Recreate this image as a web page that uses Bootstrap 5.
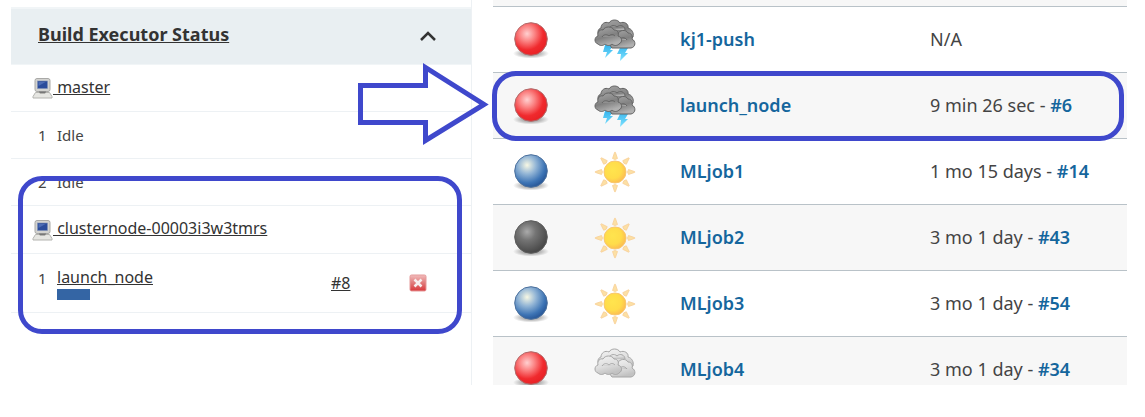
<!DOCTYPE html>
<html lang="en">
<head>
<meta charset="utf-8">
<meta name="viewport" content="width=device-width, initial-scale=1">
<title>Build Executor Status</title>
<link href="https://cdn.jsdelivr.net/npm/bootstrap@5.3.0/dist/css/bootstrap.min.css" rel="stylesheet">
<style>
  body { font-family: "Noto Sans", sans-serif; color: #444; background: #fff; }
  .board { grid-template-columns: 8fr 11fr; column-gap: 21px; padding: 0 18px 32px 11px; }
  table { width: 100%; table-layout: fixed; border-collapse: separate; border-spacing: 0; }
  td { padding: 0; vertical-align: middle; }

  /* executors */
  .side { border-right: 1px solid #edf1f4; padding-top: 7px; }
  .side-head { height: 58px; padding: 0 34px 6px 27px; background: #e9eff2; border-top: 2px solid #f1f5f7; border-bottom: 1px solid #f1f5f7; }
  .side-head h2 { font-size: 18px; line-height: 24px; font-weight: 700; }
  .side-head button { line-height: 0; padding-top: 4px; }
  .side a { color: #333; text-decoration-skip-ink: none; }
  .executors { font-size: 15px; line-height: 20px; }
  .executors td { height: 47px; border-bottom: 1px solid #edf1f4; }
  .executors .agent td { height: 48px; }
  .executors .busy td { height: 59px; }
  .executors .num { padding-left: 27px; }
  .executors .busy .num { padding-top: 14px; vertical-align: top; }
  .executors .node { padding-left: 21px; }
  .executors a { font-size: 16px; }
  .executors .progress { width: 33px; height: 11px; margin-top: 2px; border-radius: 0; --bs-progress-bar-bg: #3465a4; }
  .w-num { width: 46px; } .w-build { width: 62px; } .w-stop { width: 78px; }

  /* jobs */
  .strip { height: 7px; background: #f7f7f7; border-bottom: 1px solid #b9c2c8; }
  .jobs { font-size: 18px; line-height: 24px; }
  .jobs td { height: 66px; border-bottom: 1px solid #b9c2c8; }
  .jobs tr:nth-child(even) td { background: #f7f7f7; }
  .jobs a { color: #15669d; font-weight: 600; text-decoration: none; }
  .jobs .txt { padding-left: 19px; padding-bottom: 2px; }
  .jobs .cut td { height: 48px; border: 0; vertical-align: top; padding-top: 20px; }
  .jobs .cut .pic { padding-top: 8px; }
  .cut .pic div { height: 40px; overflow: hidden; }
  .pic { text-align: center; }
  .pic svg { display: block; width: 48px; height: 48px; margin: 0 auto; }
  .w-ball { width: 76px; } .w-sky { width: 92px; } .w-job { width: 250px; }

  /* annotations drawn over the page */
  .ring { position: absolute; border: 5px solid #3f48cc; border-radius: 24px; pointer-events: none; z-index: 2; }
  .ring-node { inset: -30px 9px -21px 7px; }
  .ring-job { inset: -2px 3px -2px -1px; }
  .arrow { position: absolute; right: 100%; top: -13px; margin-right: 4px; z-index: 2; }
</style>
</head>
<body>
<svg width="0" height="0" class="position-absolute" aria-hidden="true">
  <defs>
    <radialGradient id="gRed" cx=".38" cy=".34" r=".66"><stop offset="0" stop-color="#ffd0d0"/><stop offset=".35" stop-color="#fb8585"/><stop offset=".75" stop-color="#f02a2e"/><stop offset="1" stop-color="#e92226"/></radialGradient>
    <radialGradient id="gBlue" cx=".38" cy=".32" r=".68"><stop offset="0" stop-color="#f8f8e4"/><stop offset=".4" stop-color="#94b6d6"/><stop offset=".8" stop-color="#3d74b5"/><stop offset="1" stop-color="#2a5a9b"/></radialGradient>
    <radialGradient id="gGrey" cx=".38" cy=".34" r=".66"><stop offset="0" stop-color="#aaa"/><stop offset=".4" stop-color="#747474"/><stop offset="1" stop-color="#484848"/></radialGradient>
    <radialGradient id="gShade"><stop offset="0" stop-color="#000" stop-opacity=".5"/><stop offset=".6" stop-color="#000" stop-opacity=".22"/><stop offset="1" stop-color="#000" stop-opacity="0"/></radialGradient>
    <radialGradient id="gSun" cx=".4" cy=".4" r=".65"><stop offset="0" stop-color="#ffe44e"/><stop offset=".6" stop-color="#ffdc4a"/><stop offset="1" stop-color="#fcb852"/></radialGradient>
    <linearGradient id="gStorm" x1="0" y1="0" x2=".4" y2="1"><stop offset="0" stop-color="#a8a8a8"/><stop offset=".6" stop-color="#808080"/><stop offset="1" stop-color="#b0b0b0"/></linearGradient>
    <linearGradient id="gCloud" x1="0" y1="0" x2=".4" y2="1"><stop offset="0" stop-color="#f4f4f4"/><stop offset=".6" stop-color="#dedede"/><stop offset="1" stop-color="#c2c2c2"/></linearGradient>
    <linearGradient id="gBolt" x1="0" y1="0" x2="0" y2="1"><stop offset="0" stop-color="#35b4ec"/><stop offset="1" stop-color="#7fe2ff"/></linearGradient>
    <linearGradient id="gStop" x1="0" y1="0" x2="0" y2="1"><stop offset="0" stop-color="#f2bcbc"/><stop offset=".5" stop-color="#e07a7a"/><stop offset="1" stop-color="#d9363a"/></linearGradient>
    <symbol id="red" viewBox="0 0 48 48"><ellipse cx="24" cy="37.500" rx="18" ry="5" fill="url(#gShade)"/><circle cx="24" cy="23" r="16.300" fill="url(#gRed)" stroke="#b06a6a"/></symbol>
    <symbol id="blue" viewBox="0 0 48 48"><ellipse cx="24" cy="37.500" rx="18" ry="5" fill="url(#gShade)"/><circle cx="24" cy="23" r="16.300" fill="url(#gBlue)" stroke="#4a6f9c"/></symbol>
    <symbol id="grey" viewBox="0 0 48 48"><ellipse cx="24" cy="37.500" rx="18" ry="5" fill="url(#gShade)"/><circle cx="24" cy="23" r="16.300" fill="url(#gGrey)" stroke="#5c5c5c"/></symbol>
    <symbol id="sun" viewBox="0 0 48 48">
      <g fill="#fce0a4" stroke="#f8cf98" stroke-width=".8" stroke-linejoin="round">
        <path id="ray" d="M21.500 10.500 23.600 4.300h.8l2.100 6.200-2.500 1z"/>
        <use href="#ray" transform="rotate(45 24 24)"/><use href="#ray" transform="rotate(90 24 24)"/><use href="#ray" transform="rotate(135 24 24)"/><use href="#ray" transform="rotate(180 24 24)"/><use href="#ray" transform="rotate(225 24 24)"/><use href="#ray" transform="rotate(270 24 24)"/><use href="#ray" transform="rotate(315 24 24)"/>
      </g>
      <circle cx="24" cy="24" r="11" fill="url(#gSun)" stroke="#f9c76e"/>
    </symbol>
    <symbol id="puffs" viewBox="0 0 48 48">
      <path d="M8 20c-2-4-1-7 2-8 0-4 4-7 8-5 2-4 9-4 11 0 4-2 9 1 8 5 4 1 6 5 5 9l-6 5H10z"/>
      <path d="M17 14c1-4 6-6 9-3 3-3 8-1 8 3"/>
      <path d="M21 32c-3-3-2-7 1-8-1-4 2-7 5-6 1-4 8-5 10-1 4 0 5 4 4 6 4 2 4 8-1 9z"/>
      <path d="M28 24c2-3 6-3 8 0"/>
      <path d="M7 28c-4-1-4-7 0-8-1-4 2-7 5-6 2-4 9-4 11 0 4 0 5 3 4 6 4 1 5 6 1 8-2 2-5 2-7 0-2 2-5 2-7 0-2 2-5 2-7 0z"/>
      <path d="M11 21c2-3 5-3 7-1 2-2 4-2 6 0"/>
    </symbol>
    <symbol id="storm" viewBox="0 0 48 48">
      <path d="M14 29h9l-4 5h3l-8 8 2-6h-4zM29 32h8l-3 5h3l-8 8 1-7h-4z" fill="url(#gBolt)"/>
      <use href="#puffs" fill="url(#gStorm)" stroke="#636363"/>
    </symbol>
    <symbol id="cloud" viewBox="0 0 48 48"><use href="#puffs" fill="url(#gCloud)" stroke="#a6a6a6"/></symbol>
    <symbol id="pc" viewBox="0 0 21 21">
      <rect x="3" y=".5" width="15" height="13" rx="2" fill="#d3d3d0" stroke="#a9a9a7"/>
      <rect x="5.500" y="3" width="10" height="7.500" fill="#2b4c9b" stroke="#7f8fb5" stroke-width=".6"/><path d="M6.500 4h7l-7 4z" fill="#4d6cb4"/>
      <path d="M7 13.500h7v1.500h-7z" fill="#777"/>
      <path d="M3.500 14.500h3.500l1 1h5l1-1h3.500l2.500 4v1.500H1v-1.500z" fill="#e6e6e2" stroke="#b4b4b0" stroke-linejoin="round"/>
    </symbol>
  </defs>
</svg>

<main class="board d-grid">
  <section class="side">
    <header class="side-head d-flex align-items-center justify-content-between">
      <h2 class="m-0"><a href="#">Build Executor Status</a></h2>
      <button type="button" class="btn px-0 pb-0 border-0" aria-label="Collapse"><svg width="18" height="12" viewBox="0 0 18 12" fill="none" stroke="#333" stroke-width="2.500"><path d="M2 10l7-7 7 7"/></svg></button>
    </header>
    <table class="executors">
      <colgroup><col class="w-num"><col><col class="w-build"><col class="w-stop"></colgroup>
      <tbody>
        <tr><td colspan="4" class="node"><svg width="21" height="21" aria-hidden="true"><use href="#pc"/></svg><a href="#">&nbsp;master</a></td></tr>
        <tr><td class="num">1</td><td colspan="3">Idle</td></tr>
        <tr><td class="num">2</td><td colspan="3">Idle</td></tr>
      </tbody>
      <tbody class="position-relative">
        <tr class="agent"><td colspan="4" class="node"><svg width="21" height="21" aria-hidden="true"><use href="#pc"/></svg><a href="#">&nbsp;clusternode-00003i3w3tmrs</a></td></tr>
        <tr class="busy">
          <td class="num">1</td>
          <td><a href="#">launch_node</a><div class="progress" role="progressbar" aria-label="Build progress"><div class="progress-bar w-100"></div></div></td>
          <td><a href="#">#8</a></td>
          <td><button type="button" class="btn p-0 border-0 ms-3 d-block" aria-label="Stop build"><svg class="d-block" width="18" height="18" viewBox="0 0 18 18"><rect x="1" y="1" width="16" height="16" rx="1.500" fill="url(#gStop)" stroke="#e59a9a"/><path d="M5.500 5.500l7 7m0-7l-7 7" stroke="#f7eeee" stroke-width="2.500"/></svg></button><span class="ring ring-node"></span></td>
        </tr>
      </tbody>
    </table>
  </section>

  <section>
    <div class="strip"></div>
    <table class="jobs">
      <colgroup><col class="w-ball"><col class="w-sky"><col class="w-job"><col></colgroup>
      <tbody>
        <tr><td class="pic"><svg><use href="#red"/></svg></td><td class="pic"><svg><use href="#storm"/></svg></td><td class="txt"><a href="#">kj1-push</a></td><td class="txt">N/A</td></tr>
        <tr class="position-relative"><td class="pic"><svg><use href="#red"/></svg></td><td class="pic"><svg><use href="#storm"/></svg></td><td class="txt"><a href="#">launch_node</a></td><td class="txt">9 min 26 sec - <a href="#">#6</a><span class="ring ring-job"></span>
          <svg class="arrow" width="132" height="88" viewBox="0 0 132 88" fill="none" stroke="#3f48cc" stroke-width="5"><path d="M3.500 25.500h65v-18L127 44.500 68.500 80.500V62.500h-65z"/></svg></td></tr>
        <tr><td class="pic"><svg><use href="#blue"/></svg></td><td class="pic"><svg><use href="#sun"/></svg></td><td class="txt"><a href="#">MLjob1</a></td><td class="txt">1 mo 15 days - <a href="#">#14</a></td></tr>
        <tr><td class="pic"><svg><use href="#grey"/></svg></td><td class="pic"><svg><use href="#sun"/></svg></td><td class="txt"><a href="#">MLjob2</a></td><td class="txt">3 mo 1 day - <a href="#">#43</a></td></tr>
        <tr><td class="pic"><svg><use href="#blue"/></svg></td><td class="pic"><svg><use href="#sun"/></svg></td><td class="txt"><a href="#">MLjob3</a></td><td class="txt">3 mo 1 day - <a href="#">#54</a></td></tr>
        <tr class="cut"><td class="pic"><div><svg><use href="#red"/></svg></div></td><td class="pic"><div><svg><use href="#cloud"/></svg></div></td><td class="txt"><a href="#">MLjob4</a></td><td class="txt">3 mo 1 day - <a href="#">#34</a></td></tr>
      </tbody>
    </table>
  </section>
</main>
<script src="https://cdn.jsdelivr.net/npm/bootstrap@5.3.0/dist/js/bootstrap.bundle.min.js"></script>
</body>
</html>
